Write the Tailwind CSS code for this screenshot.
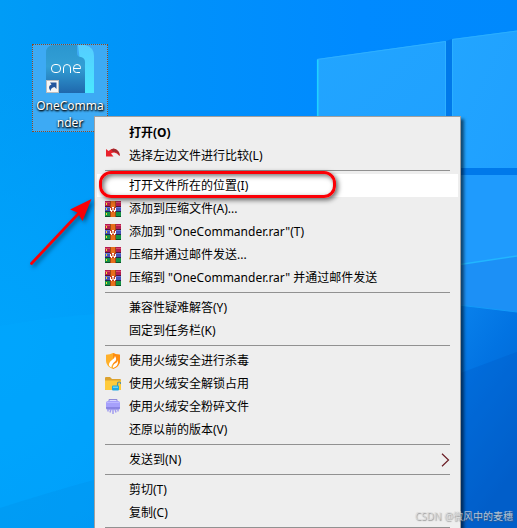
<!DOCTYPE html>
<html lang="zh-CN">
<head>
<meta charset="utf-8">
<meta name="viewport" content="width=device-width, initial-scale=1">
<title>OneCommander</title>
<script src="https://cdn.jsdelivr.net/npm/@tailwindcss/browser@4"></script>
</head>
<body class="relative h-screen overflow-hidden bg-[#0096f8] font-['Noto_Sans','Noto_Sans_CJK_SC',sans-serif] text-xs text-black">

<!-- Wallpaper -->
<svg class="absolute inset-0 h-full w-full" viewBox="0 0 517 528" preserveAspectRatio="none" aria-hidden="true">
  <defs>
    <linearGradient id="sky" x1="0" y1="0" x2="1" y2="0">
      <stop offset="0" stop-color="#009cf6"/><stop offset=".35" stop-color="#0091fb"/><stop offset=".7" stop-color="#008aff"/><stop offset="1" stop-color="#0089fc"/>
    </linearGradient>
    <radialGradient id="low" cx="0" cy=".65" r=".5">
      <stop offset="0" stop-color="#00a4fc"/><stop offset=".4" stop-color="#00a2fb" stop-opacity=".8"/><stop offset="1" stop-color="#00a0fa" stop-opacity="0"/>
    </radialGradient>
    <linearGradient id="deep" x1="0" y1="0" x2=".4" y2="1">
      <stop offset="0" stop-color="#0a84ee"/><stop offset=".4" stop-color="#0273e2"/><stop offset="1" stop-color="#0260ca"/>
    </linearGradient>
    <linearGradient id="pane" x1="0" y1="0" x2="1" y2="1">
      <stop offset="0" stop-color="#22a5ff"/><stop offset="1" stop-color="#1fa0ff"/>
    </linearGradient>
  </defs>
  <rect width="517" height="528" fill="url(#sky)"/>
  <rect width="517" height="528" fill="url(#low)"/>
  <path d="M0 326Q50 317 94 314V528H0Z" fill="#00a8ff" opacity=".35"/>
  <path d="M0 508Q50 492 94 480V528H0Z" fill="#008ce4" opacity=".25"/>
  <path d="M446 41L452 39V168H517V175H446Z" fill="#0079ea"/>
  <path d="M317 59L446 41V170H317Z" fill="url(#pane)"/>
  <path d="M317.700 170V59.500" stroke="#20d2ff" stroke-width="1.600" fill="none"/>
  <path d="M317 59.500L445.500 41.500V170" stroke="#2eb0ff" fill="none"/>
  <path d="M452 39L517 30.500V168H452Z" fill="url(#pane)"/>
  <path d="M452.500 168V39.500L517 31" stroke="#2aafff" fill="none"/>
  <path d="M450 175H517V256L450 266Z" fill="#1f9bfd"/>
  <path d="M450 266L517 256V312L450 304Z" fill="#1c90f6"/>
  <path d="M450 266L517 256" stroke="#22b6ff" stroke-width="1.500"/>
  <path d="M450 304L517 312V528H450Z" fill="url(#deep)"/>
  <path d="M450 304L517 312" stroke="#159bf8"/>
  <path d="M450 377L517 352V528H450Z" fill="#0058c8" opacity=".3"/>
</svg>

<!-- Desktop shortcut -->
<a href="#" class="absolute left-8 top-11 flex w-19 flex-col items-center border border-dotted border-[#8a4a28] bg-[#3daaf4] text-white">
  <svg class="size-12" viewBox="0 0 48 48" aria-hidden="true">
    <defs>
      <linearGradient id="doc" x1="0" y1="0" x2="0" y2="1"><stop offset="0" stop-color="#2b96cf"/><stop offset=".45" stop-color="#329fd5"/><stop offset="1" stop-color="#1f68ad"/></linearGradient>
      <linearGradient id="fold" x1="0" y1="0" x2="0" y2="1"><stop offset="0" stop-color="#55cdff"/><stop offset="1" stop-color="#4ae8ff"/></linearGradient>
    </defs>
    <path d="M32 0H39Q48 2 48 11V48H38Z" fill="url(#fold)"/>
    <path d="M8 0H31V8Q31 12 35 12Q39 13 39 17V48H0V8Q0 0 8 0Z" fill="url(#doc)"/>
    <g fill="none" stroke="#fff">
      <rect x="5.500" y="19.500" width="9" height="8" rx="3.500"/>
      <path d="M17.500 28V23Q17.500 19.500 21 19.500Q24.500 19.500 24.500 23V28M27.500 23.500H34.500V22.500Q34.500 19.500 31 19.500Q27.500 19.500 27.500 23V24.500Q27.500 27.500 30.500 27.500H34"/>
    </g>
    <rect x=".5" y="35.500" width="12" height="12" fill="#f6f6f6" stroke="#bdbdbd"/>
    <path d="M4.500 46Q1 41 5.500 39.500L4 37.500H10.500V44L8.500 42Q5 42.500 4.500 46Z" fill="#24569d"/>
  </svg>
  <span class="mt-1 w-full text-center leading-[17px] text-shadow-[0_1px_2px_#000,1px_1px_2px_#000]">OneComma<br>nder</span>
</a>

<!-- Shared icon -->
<svg class="hidden" aria-hidden="true">
  <symbol id="rar" viewBox="0 0 16 16">
    <rect width="16" height="5" fill="#b51c4f"/><rect y="1" width="16" height="1" fill="#d84a68"/>
    <rect y="5" width="16" height="1" fill="#501638"/>
    <rect y="6" width="16" height="4" fill="#4652b8"/><rect y="6" width="16" height="1" fill="#6878d4"/>
    <rect y="10" width="16" height="1" fill="#222850"/>
    <rect y="11" width="16" height="4" fill="#159344"/><rect y="15" width="16" height="1" fill="#0d512b"/>
    <path d="M1 2h1v2H1zM1 7h1v2H1zM1 12h1v2H1z" fill="#f5e02e"/>
    <rect x="5" width="6" height="16" fill="#9c4a18"/><rect x="6" width="4" height="16" fill="#e86e1b"/>
    <path d="M5 6h6v5H5z" fill="#c03a22"/>
    <path d="M5 7h1v3H5zM10 7h1v3h-1zM6 9h1v2H6zM9 9h1v2H9zM7 6h2v1H7z" fill="#fff"/>
    <path d="M7 7h2v3H7z" fill="#e9b79c"/>
  </symbol>
</svg>

<!-- Context menu -->
<ul role="menu" class="absolute bottom-0 left-[94px] top-[116px] w-[367px] overflow-hidden border border-b-0 border-[#a0a0a0] bg-[#eeeeee] px-[2px] pt-1 shadow-[3px_3px_3px_rgba(0,0,0,0.55)]">
  <li role="none"><button role="menuitem" class="flex h-[23px] w-full items-center gap-2 pl-2 text-left font-bold"><span class="size-4"></span>打开(O)</button></li>
  <li role="none"><button role="menuitem" class="flex h-[23px] w-full items-center gap-2 pl-2 text-left">
    <svg class="size-4" viewBox="0 0 16 16" aria-hidden="true"><path d="M1 1L3.500 3Q9 -2 13 3Q15 5 14.500 8Q10.500 2.500 6 5.500L8.500 8.500H1Z" fill="#e8222c"/><path d="M6 1.500Q10 -.5 13 3Q15 5 14.500 8Q12 3 8 4Z" fill="#9e2a2e"/></svg>选择左边文件进行比较(L)</button></li>
  <li role="separator" class="mx-2 my-[3px] h-px bg-[#919191]"></li>
  <li role="none"><button role="menuitem" class="flex h-[23px] w-full items-center gap-2 bg-white pl-2 text-left"><span class="size-4"></span>打开文件所在的位置(I)</button></li>
  <li role="none"><button role="menuitem" class="flex h-[23px] w-full items-center gap-2 pl-2 text-left"><svg class="size-4" aria-hidden="true"><use href="#rar"/></svg>添加到压缩文件(A)...</button></li>
  <li role="none"><button role="menuitem" class="flex h-[23px] w-full items-center gap-2 pl-2 text-left"><svg class="size-4" aria-hidden="true"><use href="#rar"/></svg>添加到 "OneCommander.rar"(T)</button></li>
  <li role="none"><button role="menuitem" class="flex h-[23px] w-full items-center gap-2 pl-2 text-left"><svg class="size-4" aria-hidden="true"><use href="#rar"/></svg>压缩并通过邮件发送...</button></li>
  <li role="none"><button role="menuitem" class="flex h-[23px] w-full items-center gap-2 pl-2 text-left"><svg class="size-4" aria-hidden="true"><use href="#rar"/></svg>压缩到 "OneCommander.rar" 并通过邮件发送</button></li>
  <li role="separator" class="mx-2 my-[3px] h-px bg-[#919191]"></li>
  <li role="none"><button role="menuitem" class="flex h-[23px] w-full items-center gap-2 pl-2 text-left"><span class="size-4"></span>兼容性疑难解答(Y)</button></li>
  <li role="none"><button role="menuitem" class="flex h-[23px] w-full items-center gap-2 pl-2 text-left"><span class="size-4"></span>固定到任务栏(K)</button></li>
  <li role="separator" class="mx-2 my-[3px] h-px bg-[#919191]"></li>
  <li role="none"><button role="menuitem" class="flex h-[23px] w-full items-center gap-2 pl-2 text-left">
    <svg class="size-4" viewBox="0 0 16 16" aria-hidden="true"><path d="M8 0Q11 1.500 15 1.700V8Q15 13 8 16Q1 13 1 8V1.700Q5 1.500 8 0Z" fill="#ffb02a"/><path d="M8 0Q11 1.500 15 1.700V8Q15 13 8 16Z" fill="#ff8c10"/><path d="M10 3Q10 5 7 7Q3.500 9.500 4 12.500Q5 14 6.500 14.500Q6 11.500 10.500 8Q12 6 10 3Z" fill="#fff"/><path d="M12.500 7Q13 9 10 10.500Q7.500 12 8 15Q13 13.500 13 9Q13 8 12.500 7Z" fill="#fff"/></svg>使用火绒安全进行杀毒</button></li>
  <li role="none"><button role="menuitem" class="flex h-[23px] w-full items-center gap-2 pl-2 text-left">
    <svg class="size-4" viewBox="0 0 16 16" aria-hidden="true"><path d="M0 2Q0 1 1 1H5L7 3H15Q16 3 16 4V13Q16 14 15 14H1Q0 14 0 13Z" fill="#dca22f"/><path d="M0 4.500H16V13Q16 14 15 14H1Q0 14 0 13Z" fill="#ffcb3b"/><path d="M12.500 10V8Q12.500 6 14.200 6Q16 6 15.500 8" stroke="#5d9192" fill="none" stroke-width="1.200"/><rect x="7" y="9.500" width="7" height="5" rx="1" fill="#20a8e0"/><rect x="8" y="10.500" width="5" height="1.500" fill="#67d5f4"/></svg>使用火绒安全解锁占用</button></li>
  <li role="none"><button role="menuitem" class="flex h-[23px] w-full items-center gap-2 pl-2 text-left">
    <svg class="size-4" viewBox="0 0 16 16" aria-hidden="true"><path d="M4 3V.5H12V3" fill="#d8d6ff" stroke="#8f8ad8"/><rect x="1" y="2" width="14" height="8.500" rx="2" fill="#a6a0fb"/><path d="M2 3.500H14" stroke="#bcb8ff"/><path d="M1 8H15V9Q15 10.500 13 10.500H3Q1 10.500 1 9Z" fill="#8a84e2"/><path d="M3 10V12.500M6 10L5 13.500M8 10V15M10 10L11 13.500M13 10V12.500" stroke="#a19cf0" stroke-width="1.500"/></svg>使用火绒安全粉碎文件</button></li>
  <li role="none"><button role="menuitem" class="flex h-[23px] w-full items-center gap-2 pl-2 text-left"><span class="size-4"></span>还原以前的版本(V)</button></li>
  <li role="separator" class="mx-2 my-[3px] h-px bg-[#919191]"></li>
  <li role="none"><button role="menuitem" aria-haspopup="true" class="flex h-[23px] w-full items-center gap-2 pl-2 pr-2 text-left"><span class="size-4"></span>发送到(N)
    <svg class="ml-auto h-[14px] w-[9px]" viewBox="0 0 9 14" aria-hidden="true"><path d="M1 .8L7.500 7L1 13.200" fill="none" stroke="#6a1c24" stroke-width="1.200"/></svg></button></li>
  <li role="separator" class="mx-2 my-[3px] h-px bg-[#919191]"></li>
  <li role="none"><button role="menuitem" class="flex h-[23px] w-full items-center gap-2 pl-2 text-left"><span class="size-4"></span>剪切(T)</button></li>
  <li role="none"><button role="menuitem" class="flex h-[23px] w-full items-center gap-2 pl-2 text-left"><span class="size-4"></span>复制(C)</button></li>
  <li role="separator" class="mx-2 mt-[3px] h-px bg-[#919191]"></li>
</ul>

<!-- Annotations -->
<div class="pointer-events-none absolute left-[99px] top-[171px] h-[27px] w-[237px] rounded-xl border-3 border-[#fb0006] shadow-[2px_2px_5px_rgba(0,0,0,0.6),inset_2px_2px_5px_rgba(0,0,0,0.55)]"></div>
<svg class="pointer-events-none absolute left-6 top-48 h-20 w-20 drop-shadow-[2px_2px_2px_rgba(0,0,0,0.5)]" viewBox="24 192 80 80" aria-hidden="true">
  <path d="M31.500 263.500L80 212" stroke="#fb0006" stroke-width="2.800" stroke-linecap="round"/>
  <path d="M91.500 199L70 209.500L77.500 212.500L82.500 221Z" fill="#fb0006"/>
</svg>

<p class="pointer-events-none absolute bottom-1 right-1 text-[10px] leading-4 text-[#dcdcdc]/80 text-shadow-[1px_1px_1px_rgba(90,90,90,0.6)]">CSDN @微风中的麦穗</p>
</body>
</html>
